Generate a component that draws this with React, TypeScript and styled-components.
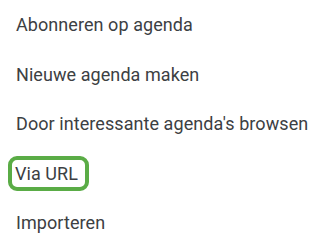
import React from "react";
import styled, { createGlobalStyle } from "styled-components";

const Global = createGlobalStyle`
  html, body { margin: 0; padding: 0; background: #ffffff; }
  body { font-family: Roboto, "Noto Sans", Arial, sans-serif; }
`;

const Menu = styled.ul`
  list-style: none;
  margin: 0;
  padding: 0;
  width: 319px;
`;

const Item = styled.li`
  height: 49.5px;
  display: flex;
  align-items: center;
  padding-left: 16px;
  font-size: 18px;
  letter-spacing: 0.07px;
  color: #3c4043;
  white-space: nowrap;
`;

const Highlight = styled.span`
  display: inline-block;
  margin-left: -8px;
  padding: 3px 7px 3px 3px;
  border: 4.5px solid #5aac46;
  border-radius: 9px;
  line-height: 21px;
`;

const items = [
  "Abonneren op agenda",
  "Nieuwe agenda maken",
  "Door interessante agenda's browsen",
  "Via URL",
  "Importeren",
];

export default function App() {
  return (
    <>
      <Global />
      <Menu>
        {items.map((t) =>
          t === "Via URL" ? (
            <Item key={t}>
              <Highlight>{t}</Highlight>
            </Item>
          ) : (
            <Item key={t}>{t}</Item>
          )
        )}
      </Menu>
    </>
  );
}
